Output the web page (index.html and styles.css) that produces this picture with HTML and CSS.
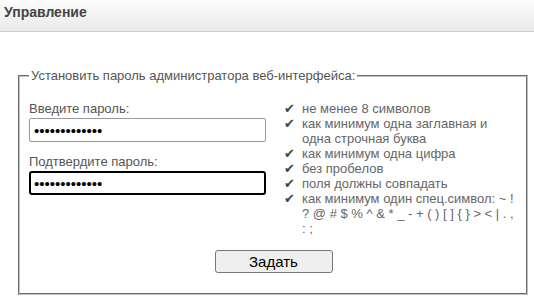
FILE: index.html
```html
<!DOCTYPE html>
<html lang="ru">
<head>
<meta charset="utf-8">
<meta name="viewport" content="width=device-width, initial-scale=1">
<title>Управление</title>
<link rel="stylesheet" href="styles.css">
</head>
<body>

<div class="header">Управление</div>

<fieldset class="box">
  <legend>Установить пароль администратора веб-интерфейса:</legend>
  <div class="cols">
    <div class="fields">
      <label for="pass1">Введите пароль:</label>
      <input id="pass1" type="password" value="1234567890123">
      <label for="pass2">Подтвердите пароль:</label>
      <input id="pass2" class="active" type="password" value="1234567890123" autofocus>
    </div>
    <ul class="rules">
      <li><span class="check">✔</span><span>не менее 8 символов</span></li>
      <li><span class="check">✔</span><span>как минимум одна заглавная и одна строчная буква</span></li>
      <li><span class="check">✔</span><span>как минимум одна цифра</span></li>
      <li><span class="check">✔</span><span>без пробелов</span></li>
      <li><span class="check">✔</span><span>поля должны совпадать</span></li>
      <li><span class="check">✔</span><span>как минимум один спец.символ: ~ ! ? @ # $ % ^ &amp; * _ - + ( ) [ ] { } &gt; &lt; | . , : ;</span></li>
    </ul>
  </div>
  <div class="actions">
    <button type="button">Задать</button>
  </div>
</fieldset>

<script>
  var p2 = document.getElementById('pass2');
  p2.focus();
  p2.setSelectionRange(p2.value.length, p2.value.length);
</script>

</body>
</html>
```

FILE: styles.css
```css
body { margin: 0; font-family: "Liberation Sans", Arial, sans-serif; background: #fff; }
.header {
  height: 31px;
  line-height: 24px;
  padding-left: 4px;
  font-size: 14px;
  font-weight: bold;
  color: #444;
  background: linear-gradient(#fdfdfd, #e9e9e9);
  border-bottom: 1px solid #d0d0d0;
}
.box {
  margin: 36px 6px 0 18px;
  padding: 0 8px 20px 9px;
  font-size: 13px;
  border: 2px groove #c0c0c0;
}
.box legend { color: #555; padding: 0 2px; line-height: 15px; }
.cols { display: flex; gap: 18px; padding-top: 18px; }
.fields { width: 237px; flex: none; }
.fields label { display: block; line-height: 15px; color: #555; margin-bottom: 2px; }
.fields input {
  display: block;
  box-sizing: border-box;
  width: 237px;
  height: 24px;
  margin: 0 0 12px;
  padding: 0 4px;
  font: 15px "Liberation Sans", Arial, sans-serif;
  border: 1px solid #999;
  border-radius: 2px;
  outline: none;
}
.fields input.active { border: 2px solid #000; border-radius: 3px; padding: 0 3px; }
.rules { list-style: none; margin: 0; padding: 0; flex: 1; color: #666; line-height: 15px; }
.rules li { display: flex; }
.rules .check { width: 18px; flex: none; color: #444; }
.actions { text-align: center; margin-top: 14px; }
.actions button {
  width: 118px;
  height: 23px;
  font: 15px "Liberation Sans", Arial, sans-serif;
  color: #000;
  background: #efefef;
  border: 1px solid #767676;
  border-radius: 3px;
}
```
